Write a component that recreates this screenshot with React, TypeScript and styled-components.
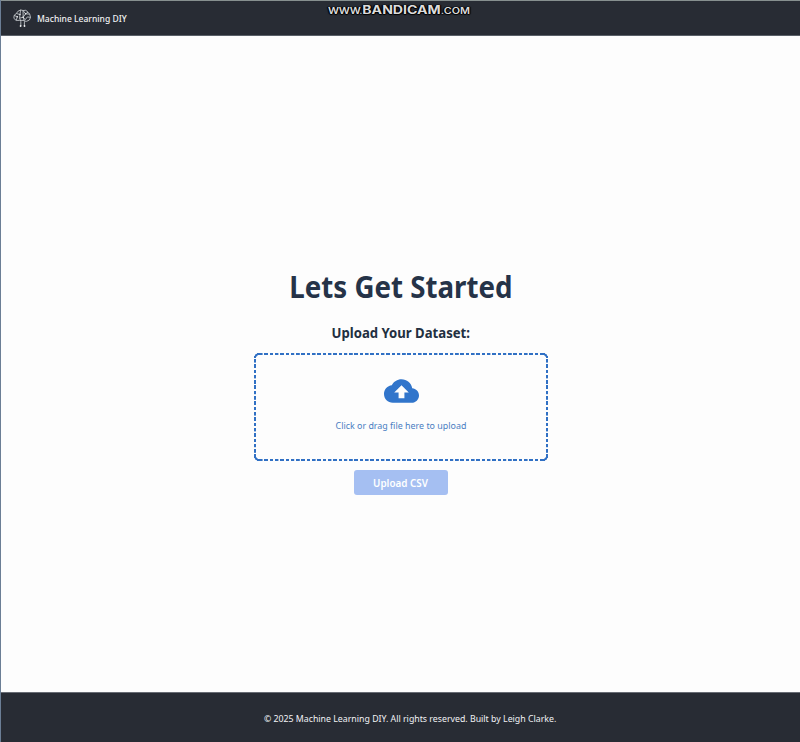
import React from "react";
import styled, { createGlobalStyle } from "styled-components";

const GlobalStyle = createGlobalStyle`
  * { box-sizing: border-box; }
  body { margin: 0; background: #fdfdfd; font-family: "Noto Sans", "Open Sans", sans-serif; }
`;

const Page = styled.div`
  position: relative;
  display: flex;
  flex-direction: column;
  width: 100%;
  height: 742px;
  overflow: hidden;
  border-left: 1px solid #6b7e95;
  background: #fdfdfd;
`;

const Header = styled.header`
  display: flex;
  align-items: center;
  gap: 6px;
  height: 36px;
  flex: none;
  padding: 0 0 0 12px;
  border-top: 1px solid #87908f;
  border-bottom: 1px solid #5a6068;
  background: #282c34;
  color: #f1f2f3;
`;

const Logo = styled.svg`
  width: 18px;
  height: 18px;
  flex: none;
`;

/* Slightly condensed text, scaled about the given origin. */
const Condensed = styled.span<{ $scale: number; $origin?: string }>`
  display: inline-block;
  white-space: nowrap;
  transform: scaleX(${(p) => p.$scale});
  transform-origin: ${(p) => p.$origin ?? "center"};
`;

const Brand = styled(Condensed)`
  padding-top: 1px;
  font-size: 9.4px;
  line-height: 14px;
  font-weight: 500;
`;

const Main = styled.main`
  display: flex;
  flex: 1;
  flex-direction: column;
  align-items: center;
  padding-top: 229px;
  color: #253348;
`;

const Title = styled.h1`
  margin: 0;
  font-size: 30px;
  font-weight: 700;
  line-height: 44px;
`;

const Subtitle = styled.h2`
  margin: 14px 0 0;
  font-size: 14px;
  font-weight: 700;
  line-height: 20px;
  color: #222f40;
`;

const DropZone = styled.div`
  --line: #3070c4;
  --corner: transparent 2.6px, var(--line) 3.2px 4.8px, transparent 5.2px;
  --dash: var(--line) 0 3.3px, transparent 3.8px 5.3px;
  display: flex;
  flex-direction: column;
  align-items: center;
  width: 294px;
  height: 108px;
  margin-top: 10px;
  padding-top: 20px;
  background:
    radial-gradient(circle at 100% 100%, var(--corner)) left top / 5px 5px no-repeat,
    radial-gradient(circle at 0 100%, var(--corner)) right top / 5px 5px no-repeat,
    radial-gradient(circle at 100% 0, var(--corner)) left bottom / 5px 5px no-repeat,
    radial-gradient(circle at 0 0, var(--corner)) right bottom / 5px 5px no-repeat,
    repeating-linear-gradient(90deg, var(--dash)) 5px 0 / 284px 2px no-repeat,
    repeating-linear-gradient(90deg, var(--dash)) 5px 100% / 284px 2px no-repeat,
    repeating-linear-gradient(180deg, var(--dash)) 0 6px / 2px 97px no-repeat,
    repeating-linear-gradient(180deg, var(--dash)) 100% 6px / 2px 97px no-repeat;
  color: #4a7dc2;
`;

const Cloud = styled.svg`
  width: 35px;
  height: 36px;
  margin-left: 1px;
  flex: none;
  fill: #3175cb;
`;

const Hint = styled(Condensed)`
  margin-top: 10px;
  font-size: 9.5px;
  line-height: 14px;
`;

const UploadButton = styled.button`
  width: 94px;
  height: 25px;
  margin: 9px 0 0;
  padding: 0;
  border: 0;
  border-radius: 3px;
  background: #a5bff2;
  color: #fff;
  font: 600 10.6px/20px "Noto Sans", sans-serif;
`;

const Footer = styled.footer`
  display: flex;
  justify-content: center;
  align-items: center;
  height: 50px;
  flex: none;
  padding: 2px 0 0 19px;
  border-top: 1px solid #686c74;
  background: #282c34;
  color: #f1f2f4;
  font-size: 9.2px;
  line-height: 14px;
`;

const Watermark = styled.div`
  position: absolute;
  top: 1px;
  left: 327px;
  display: flex;
  align-items: baseline;
  height: 18px;
  line-height: 18px;
  color: #dcdcdc;
  font-family: Inter, sans-serif;
  white-space: nowrap;
  transform-origin: left center;
  transform: scaleX(1.26);
  text-shadow: 0 0 1px #000, 0 1px 1px #000, 1px 0 1px #000, -1px 0 1px #000;
`;

const MarkPart = styled.span<{ $strong?: boolean; $tracking?: number }>`
  font-size: ${(p) => (p.$strong ? "11.2px" : "8.6px")};
  font-weight: ${(p) => (p.$strong ? 700 : 600)};
  letter-spacing: ${(p) => p.$tracking ?? 0}px;
`;

export default function App() {
  return (
    <>
      <GlobalStyle />
      <Page>
        <Header>
          <Logo viewBox="0 0 18 18" fill="none" stroke="#c9cdd1" strokeWidth="0.85" strokeLinejoin="round">
            <path d="M6.5 11.4H3.2L.9 9.4l.2-3L3.4 4.5 4.8 2.4 7.6.9l2.4.6 2.8-.2 2.2 1.9 1.7 2 .8 3.2-1.1 2.6-2.8 1.3-2-.2M1.1 6.4l3.2 1.3M3.4 4.5l3.6 1L7.6.9M4.3 7.7 3.2 11.4M7 5.5l-.4 3.7 3.6-1L10 1.5l2.6 3.3L15 3.2M10.2 8.2l2.4-3.4 4.1.4M10.2 8.2l2 2.5 2.2-2.8 3.1.5M7.8 17v-4.6L6.6 9.2M11.4 17v-4.6l-1.2-4.2M6.5 11.4h5" />
            <g fill="#eef0f1" stroke="none">
              <circle cx="7.6" cy="17" r=".9" />
              <circle cx="11.5" cy="17" r=".9" />
              <circle cx="4.3" cy="7.7" r=".8" />
              <circle cx="10.2" cy="8.2" r=".8" />
              <circle cx="12.6" cy="4.8" r=".7" />
              <circle cx="7" cy="5.5" r=".7" />
            </g>
          </Logo>
          <Brand $scale={0.91} $origin="left center">Machine Learning DIY</Brand>
        </Header>
        <Main>
          <Title><Condensed $scale={0.923}>Lets Get Started</Condensed></Title>
          <Subtitle><Condensed $scale={0.938}>Upload Your Dataset:</Condensed></Subtitle>
          <DropZone>
            <Cloud viewBox="0 0 24 24">
              <path d="M19.35 10.04C18.67 6.59 15.64 4 12 4 9.11 4 6.6 5.64 5.35 8.04 2.34 8.36 0 10.91 0 14c0 3.31 2.69 6 6 6h13c2.76 0 5-2.24 5-5 0-2.64-2.05-4.78-4.65-4.96zM14 13v4h-4v-4H7l5-5 5 5h-3z" />
            </Cloud>
            <Hint $scale={0.935}>Click or drag file here to upload</Hint>
          </DropZone>
          <UploadButton><Condensed $scale={0.93}>Upload CSV</Condensed></UploadButton>
        </Main>
        <Footer>
          <Condensed $scale={0.955}>© 2025 Machine Learning DIY. All rights reserved. Built by Leigh Clarke.</Condensed>
        </Footer>
        <Watermark>
          <MarkPart $tracking={-0.35}>WWW.</MarkPart>
          <MarkPart $strong>BANDICAM</MarkPart>
          <MarkPart>.COM</MarkPart>
        </Watermark>
      </Page>
    </>
  );
}
